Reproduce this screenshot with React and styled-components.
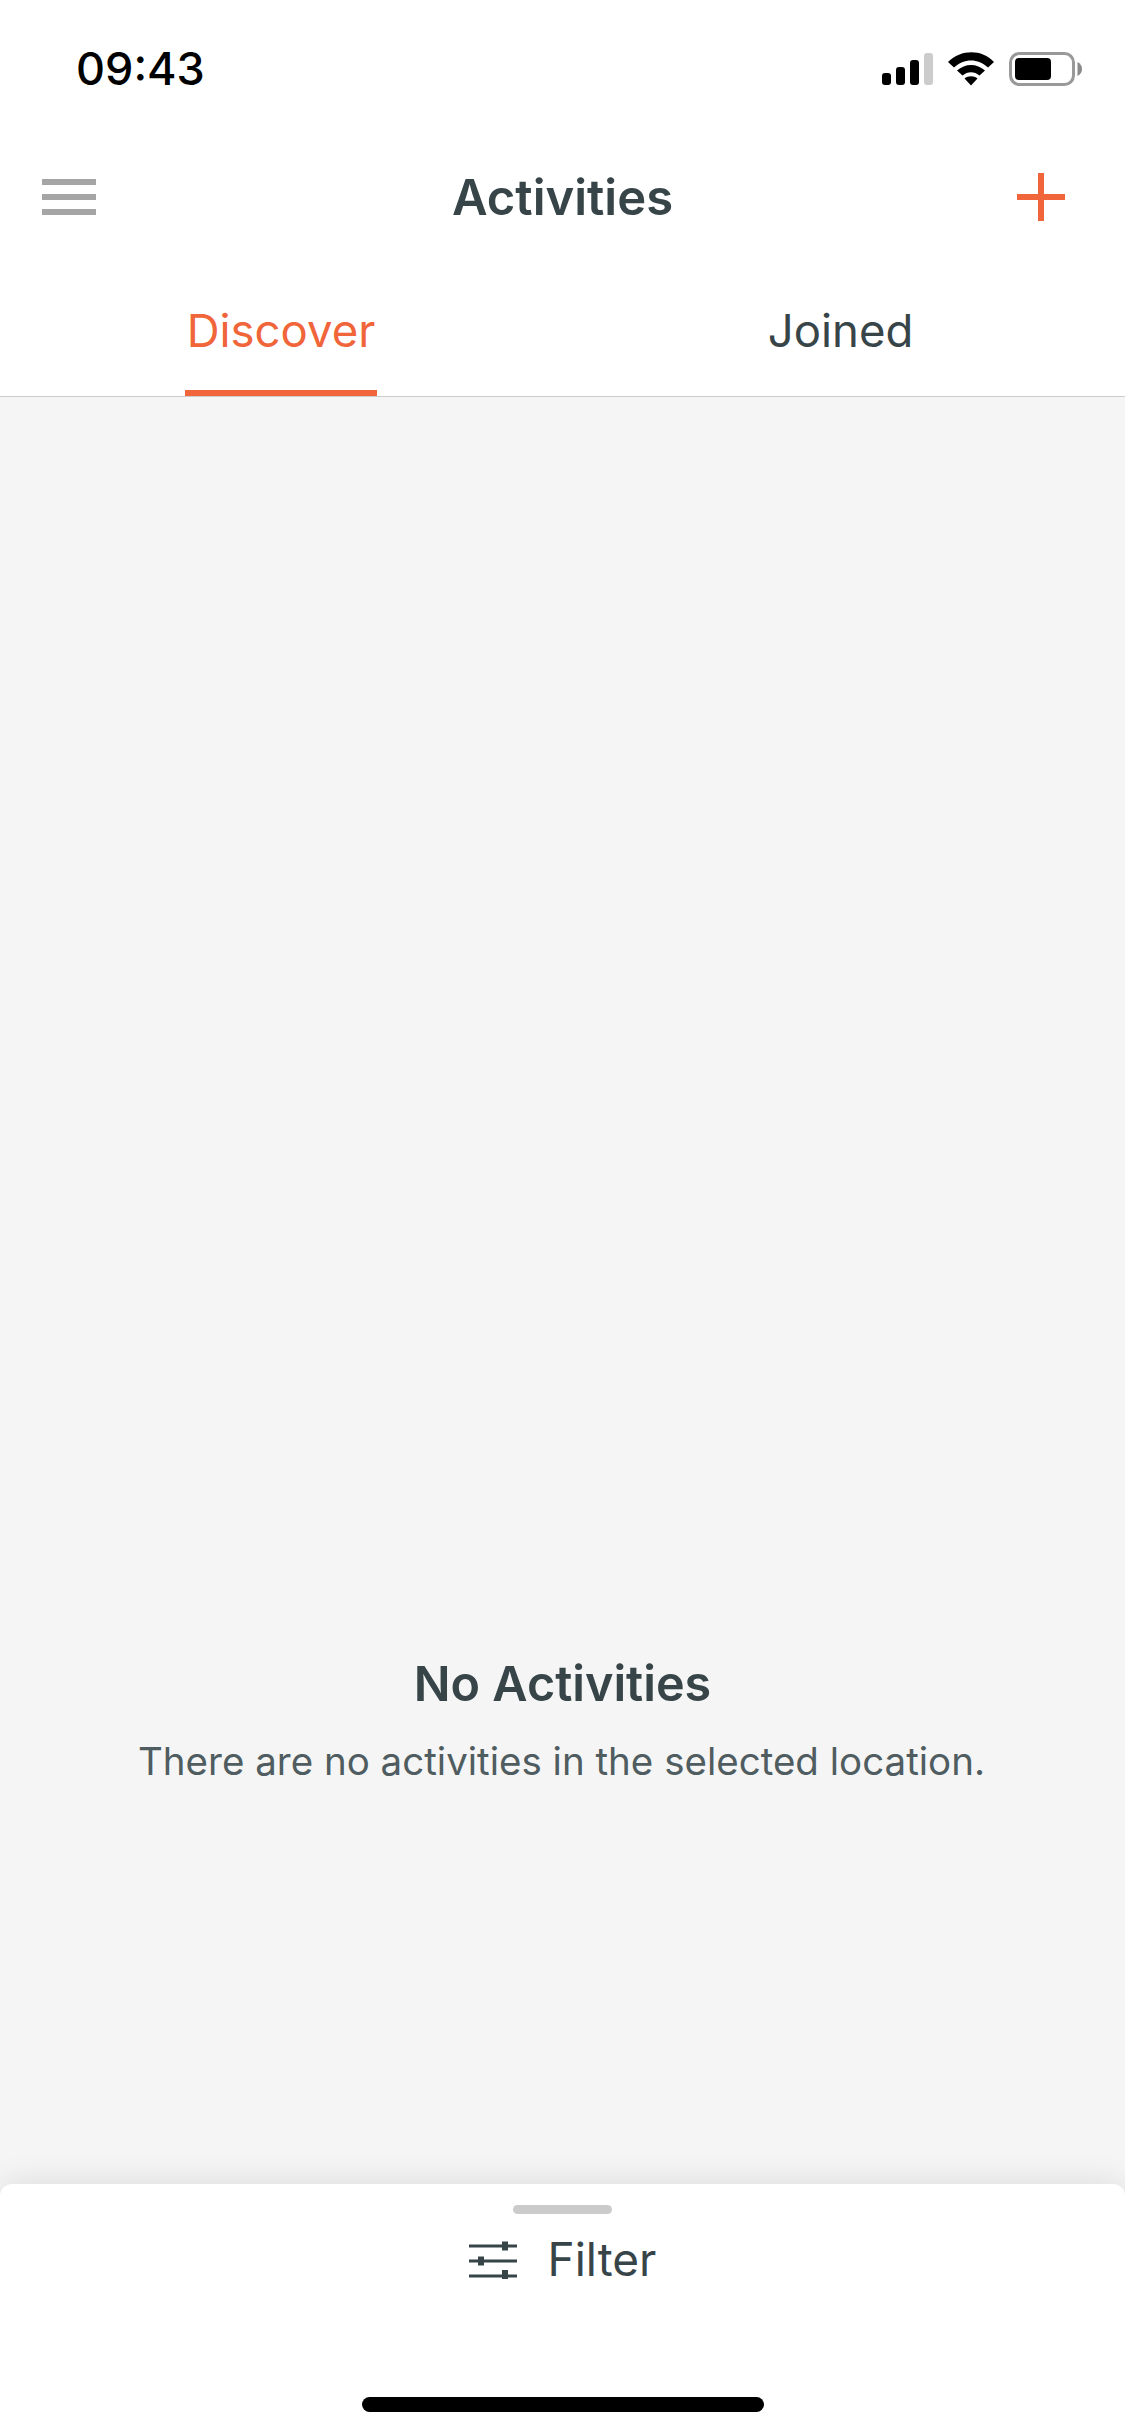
import React from 'react';
import styled, { createGlobalStyle } from 'styled-components';

const Global = createGlobalStyle`
  html, body {
    margin: 0;
    padding: 0;
    background: #fff;
  }
  * {
    box-sizing: border-box;
  }
`

const orange = '#f06539'
const slate = '#374549'

const Page = styled.div`
  width: 1125px;
  height: 2436px;
  display: flex;
  flex-direction: column;
  overflow: hidden;
  font-family: Inter, "Liberation Sans", sans-serif;
  color: ${slate};
  background: #f5f5f5;
`

const StatusBar = styled.div`
  height: 132px;
  flex: none;
  display: flex;
  justify-content: space-between;
  align-items: flex-start;
  padding: 43px 43px 0 76px;
  background: #fff;
`
const Time = styled.span`
  font-size: 45px;
  line-height: 52px;
  font-weight: 550;
  color: #000;
`
const StatusIcons = styled.svg`
  display: block;
  margin-top: 9px;
`

const NavBar = styled.div`
  height: 130px;
  flex: none;
  display: grid;
  grid-template-columns: 1fr auto 1fr;
  align-items: center;
  padding: 0 60px;
  background: #fff;
`
const MenuButton = styled.div`
  width: 54px;
  height: 36px;
  margin-left: -18px;
  display: flex;
  flex-direction: column;
  justify-content: space-between;
  & > span {
    display: block;
    height: 6px;
    background: #a5a5a5;
  }
`
const Title = styled.h1`
  margin: 2px 0 0;
  font-size: 49px;
  line-height: 60px;
  font-weight: 600;
`
const AddIcon = styled.svg`
  display: block;
  justify-self: end;
`

const Tabs = styled.div`
  height: 135px;
  flex: none;
  display: flex;
  align-items: stretch;
  padding-left: 185px;
  gap: 393px;
  background: #fff;
  border-bottom: 1px solid #ccc;
`
const Tab = styled.div`
  width: ${p => p.$w}px;
  display: flex;
  justify-content: center;
  padding-top: 41px;
  font-size: 45.5px;
  line-height: 56px;
  font-weight: 400;
  color: ${p => (p.$active ? orange : slate)};
  border-bottom: 6px solid ${p => (p.$active ? orange : 'transparent')};
`

const Content = styled.main`
  flex: 1;
  display: flex;
  flex-direction: column;
  align-items: center;
  padding-top: 1258px;
`
const EmptyTitle = styled.h2`
  margin: 0;
  font-size: 48.5px;
  line-height: 58px;
  font-weight: 600;
`
const EmptyText = styled.p`
  margin: 25px 0 0 -2px;
  font-size: 38.5px;
  line-height: 46px;
  font-weight: 400;
  color: #4f5c60;
`

const Sheet = styled.div`
  height: 252px;
  flex: none;
  display: flex;
  flex-direction: column;
  align-items: center;
  padding-top: 21px;
  background: #fff;
  border-radius: 12px 12px 0 0;
  box-shadow: 0 -4px 30px rgba(0, 0, 0, 0.09);
  z-index: 1;
`
const Handle = styled.div`
  width: 99px;
  height: 9px;
  border-radius: 5px;
  background: #cbcbcb;
`
const FilterRow = styled.div`
  margin-top: 16px;
  display: flex;
  align-items: center;
  gap: 31px;
  font-size: 46px;
  line-height: 58px;
`
const HomeIndicator = styled.div`
  margin-top: 109px;
  width: 402px;
  height: 15px;
  border-radius: 8px;
  background: #000;
`

const SignalWifiBattery = () => (
  <StatusIcons width="200" height="36" viewBox="0 0 200 36">
    <rect x="0" y="21" width="9" height="12" rx="3" fill="#000" />
    <rect x="14" y="15" width="9" height="18" rx="3" fill="#000" />
    <rect x="28" y="8" width="9" height="25" rx="3" fill="#000" />
    <rect x="42" y="1" width="9" height="32" rx="3" fill="#ccc" />
    <path d="M66 10C79 -3 100 -3 112 10L106 15.5C96 6 82 6 72 15.5Z" fill="#000" />
    <path d="M75 18.5C83 11 95 11 103 18.5L97.5 23.5C92.5 19 85.5 19 80.5 23.5Z" fill="#000" />
    <path d="M82.5 26.5C86 23.5 92 23.5 95.5 26.5L89 33.5Z" fill="#000" />
    <rect x="128.5" y="1.5" width="63" height="31" rx="9" fill="none" stroke="#999" strokeWidth="3" />
    <rect x="133" y="6" width="36" height="22" rx="4" fill="#000" />
    <path d="M195.5 10C198.5 11.5 200 14 200 17C200 20 198.5 22.5 195.5 24Z" fill="#8a8a8a" />
  </StatusIcons>
)

const FilterIcon = () => (
  <svg width="48" height="39" viewBox="0 0 48 39" fill="none">
    <g fill={slate}>
      <rect x="0" y="4.5" width="48" height="3" />
      <rect x="33" y="1.5" width="6" height="9" />
      <rect x="0" y="19.5" width="48" height="3" />
      <rect x="9" y="16.5" width="6" height="9" />
      <rect x="0" y="34.5" width="48" height="3" />
      <rect x="33" y="30" width="6" height="9" />
    </g>
  </svg>
)

export default function App() {
  return (
    <Page>
      <Global />
      <StatusBar>
        <Time>09:43</Time>
        <SignalWifiBattery />
      </StatusBar>
      <NavBar>
        <MenuButton>
          <span />
          <span />
          <span />
        </MenuButton>
        <Title>Activities</Title>
        <AddIcon width="48" height="48" viewBox="0 0 48 48">
          <rect x="21" y="0" width="6" height="48" fill={orange} />
          <rect x="0" y="21" width="48" height="6" fill={orange} />
        </AddIcon>
      </NavBar>
      <Tabs>
        <Tab $active $w={192}>Discover</Tab>
        <Tab $w={141}>Joined</Tab>
      </Tabs>
      <Content>
        <EmptyTitle>No Activities</EmptyTitle>
        <EmptyText>There are no activities in the selected location.</EmptyText>
      </Content>
      <Sheet>
        <Handle />
        <FilterRow>
          <FilterIcon />
          <span>Filter</span>
        </FilterRow>
        <HomeIndicator />
      </Sheet>
    </Page>
  )
}
